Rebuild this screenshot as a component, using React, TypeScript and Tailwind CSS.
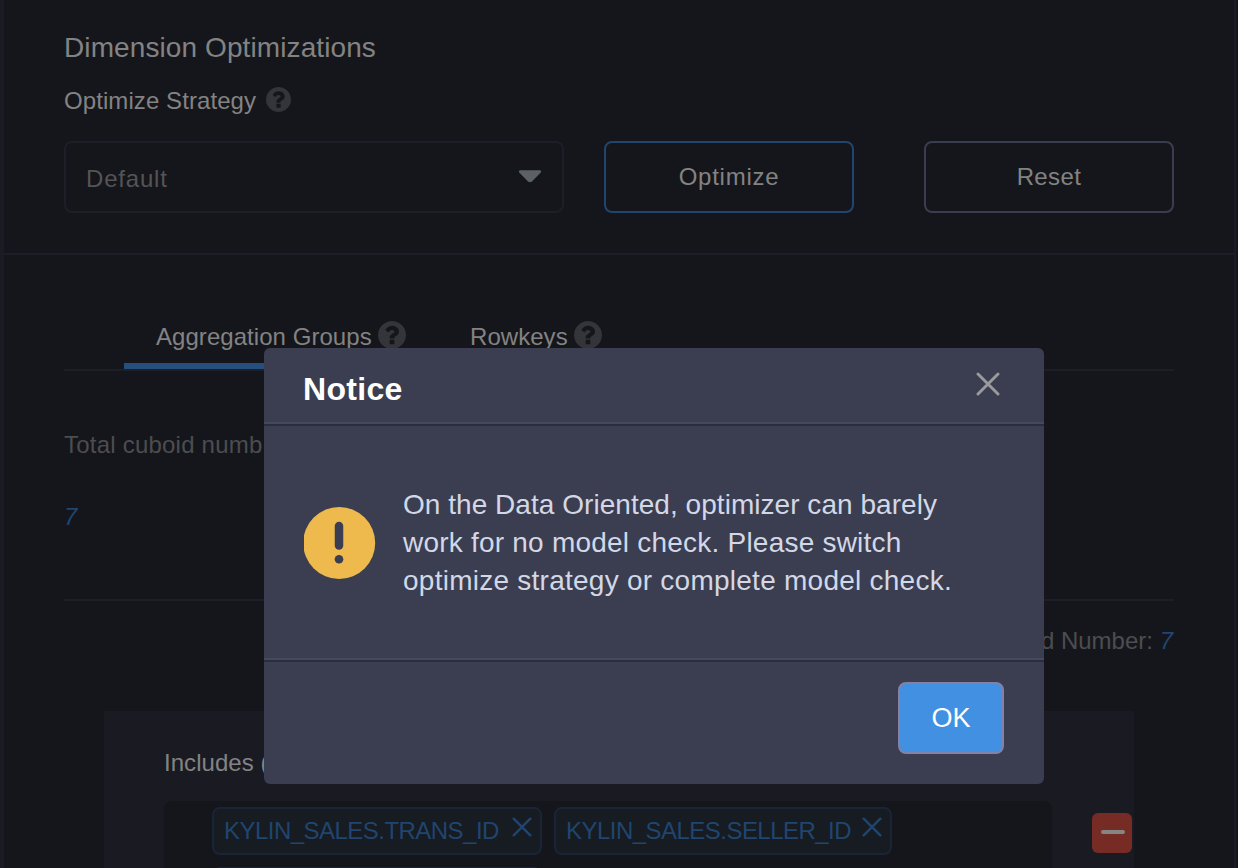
import React from 'react';

function HelpIcon({ className }: { className: string }) {
  return (
    <svg viewBox="0 0 1536 1536" className={className} fill="currentColor" aria-hidden="true">
      <path d="M896 1248v-192q0-14-9-23t-23-9H672q-14 0-23 9t-9 23v192q0 14 9 23t23 9h192q14 0 23-9t9-23zm256-672q0-88-55.500-163t-138.500-116-170-41q-243 0-371 213-15 24 8 42l132 100q7 6 19 6 16 0 25-12 53-68 86-92 34-24 86-24 48 0 85.500 26t37.500 59q0 38-20 61t-68 45q-63 28-115.500 86.500T640 892v36q0 14 9 23t23 9h192q14 0 23-9t9-23q0-19 21.500-49.500T972 829q32-18 49-28.500t46-35 44.500-48 28-60.500 12.500-81zm384 192q0 209-103 385.500T1153.500 1433 768 1536t-385.500-103T103 1153.500 0 768t103-385.500T382.500 103 768 0t385.500 103T1433 382.500 1536 768z" />
    </svg>
  );
}

function CloseIcon({ className }: { className: string }) {
  return (
    <svg viewBox="0 0 24 24" className={className} fill="none" stroke="currentColor" strokeWidth="2.9" strokeLinecap="round" aria-hidden="true">
      <path d="M2 2 22 22M22 2 2 22" />
    </svg>
  );
}

function Tag({ label, className }: { label: string; className: string }) {
  return (
    <div className={`flex h-12 shrink-0 items-start rounded-lg border-2 border-[#192537] bg-[#171b22] pl-[10px] text-[#20456f] ${className}`}>
      <span className="w-[286px] shrink grow-0 whitespace-nowrap leading-[44px] tracking-[-0.53px]">{label}</span>
      <CloseIcon className="mt-[8px] mr-[8px] ml-auto h-5 w-5 shrink-0" />
    </div>
  );
}

function Optimizations() {
  return (
    <section className="h-[255px] shrink-0 border-b-2 border-[#1d1e28] px-[60px] pt-8">
      <h1 className="text-[28px] leading-8 tracking-[0.1px] text-[#838383]">Dimension Optimizations</h1>
      <div className="mt-[21px] flex h-8 items-start">
        <span className="leading-8 tracking-[0.08px] text-[#838383]">Optimize Strategy</span>
        <HelpIcon className="mt-[2px] ml-[10px] h-[25px] w-[25px] text-[#34353a]" />
      </div>
      <div className="mt-6 flex">
        <div className="flex h-[72px] w-[500px] items-center justify-between rounded-lg border-2 border-[#1d1e28] pr-5 pl-5">
          <span className="pt-[3px] tracking-[0.8px] text-[#535456]">Default</span>
          <svg viewBox="0 0 24 13" className="mb-[1px] h-[13px] w-6 text-[#5c6167]" fill="currentColor" aria-hidden="true">
            <path d="M2 .3h20q2 .4 1 2L14 11.500q-2 1.500-4 0L1 2.300q-1-1.600 1-2z" />
          </svg>
        </div>
        <button className="ml-10 h-[72px] w-[250px] rounded-lg border-2 border-[#20456f] tracking-[0.75px] text-[#838383]">Optimize</button>
        <button className="ml-[70px] h-[72px] w-[250px] rounded-lg border-2 border-[#393d4f] tracking-[0.4px] text-[#838383]">Reset</button>
      </div>
    </section>
  );
}

function Tabs() {
  return (
    <div className="mt-[50px] flex h-[66px] shrink-0 border-b-2 border-[#1d1e28] pl-[60px] text-[#838383]">
      <div className="flex h-16 w-[315px] items-start border-b-[6px] border-[#25507e] pt-4 pl-8">
        <span className="leading-8 tracking-[0.05px]">Aggregation Groups</span>
        <HelpIcon className="ml-[6px] h-7 w-7 text-[#34353a]" />
      </div>
      <div className="flex items-start pt-4 pl-[31px]">
        <span className="leading-8 tracking-[0.05px]">Rowkeys</span>
        <HelpIcon className="ml-[6px] h-7 w-7 text-[#34353a]" />
      </div>
    </div>
  );
}

function GroupCard() {
  return (
    <div className="mx-10 mt-[54px] h-[157px] shrink-0 overflow-hidden bg-[#1a1a23] px-[60px] pt-9">
      <div className="leading-8 tracking-[0.05px] text-[#838383]">Includes (</div>
      <div className="mt-[22px] flex w-[968px] items-start justify-between">
        <div className="flex h-24 w-[888px] flex-wrap content-start gap-x-3 gap-y-3 rounded-lg bg-[#15161b] pt-[6px] pl-12">
          <Tag label="KYLIN_SALES.TRANS_ID" className="w-[330px]" />
          <Tag label="KYLIN_SALES.SELLER_ID" className="w-[338px]" />
          <Tag label="" className="w-[330px]" />
        </div>
        <button aria-label="Remove" className="mt-3 flex h-10 w-10 items-center justify-center rounded-md bg-[#762b24]">
          <span className="mt-[-2px] ml-[1px] h-1 w-6 rounded-full bg-[#858585]" />
        </button>
      </div>
    </div>
  );
}

function NoticeDialog() {
  return (
    <div role="dialog" className="absolute top-[348px] left-[264px] flex h-[436px] w-[780px] flex-col rounded-md bg-[#3a3e50]">
      <header className="flex h-[76px] items-start justify-between border-b-2 border-[#454960] pr-[44px] pl-[39px]">
        <h2 className="pt-[21px] text-[32px] leading-10 font-bold tracking-[0.3px] text-white">Notice</h2>
        <CloseIcon className="mt-[24px] h-6 w-6 text-[#9b9b9e]" />
      </header>
      <div className="flex h-[236px] border-t-2 border-b-2 border-t-[#2a2d3a] border-b-[#454960] pl-10">
        <svg viewBox="0 0 72 72" className="mt-[81px] h-[72px] w-[72px] shrink-0" aria-hidden="true">
          <circle cx="35.200" cy="36" r="36" fill="#efba4d" />
          <path d="M35 19v19.500" stroke="#3a3e50" strokeWidth="8.500" strokeLinecap="round" />
          <circle cx="35" cy="52.300" r="4.300" fill="#3a3e50" />
        </svg>
        <p className="mt-[60px] ml-[27px] text-[28px] leading-[38px] whitespace-nowrap text-[#d3d7e6]">
          <span className="tracking-[0.04px]">On the Data Oriented, optimizer can barely</span><br />
          <span className="tracking-[0.22px]">work for no model check. Please switch</span><br />
          <span className="tracking-[0.25px]">optimize strategy or complete model check.</span>
        </p>
      </div>
      <footer className="flex grow justify-end border-t-2 border-[#2a2d3a] pt-5 pr-10">
        <button className="h-[72px] w-[106px] rounded-lg border-2 border-[#8580a5] bg-[#4190e2] pt-[2px] text-[27px] text-white">OK</button>
      </footer>
    </div>
  );
}

export default function App() {
  return (
    <div className="relative h-[868px] w-[1238px] overflow-hidden bg-[#15161b] font-['Liberation_Sans',Arial,sans-serif] text-2xl">
      <main className="flex h-full w-[1236px] flex-col border-r-2 border-l-4 border-r-[#1b1c25] border-l-[#1b1c23]">
        <Optimizations />
        <div className="flex grow flex-col px-[60px]">
          <Tabs />
          <div className="mt-[58px] w-[199px] overflow-hidden leading-8 whitespace-nowrap tracking-[0.22px] text-[#4c4d50]">Total cuboid numb</div>
          <div className="mt-10 leading-8 text-[#20456f] italic">7</div>
          <div className="mt-[66px] h-[2px] shrink-0 bg-[#1d1e28]" />
          <div className="mt-6 pr-[1px] text-right leading-8 text-[#4c4d50]">
            Cuboid Number: <span className="text-[#20456f] italic">7</span>
          </div>
          <GroupCard />
        </div>
      </main>
      <NoticeDialog />
    </div>
  );
}
